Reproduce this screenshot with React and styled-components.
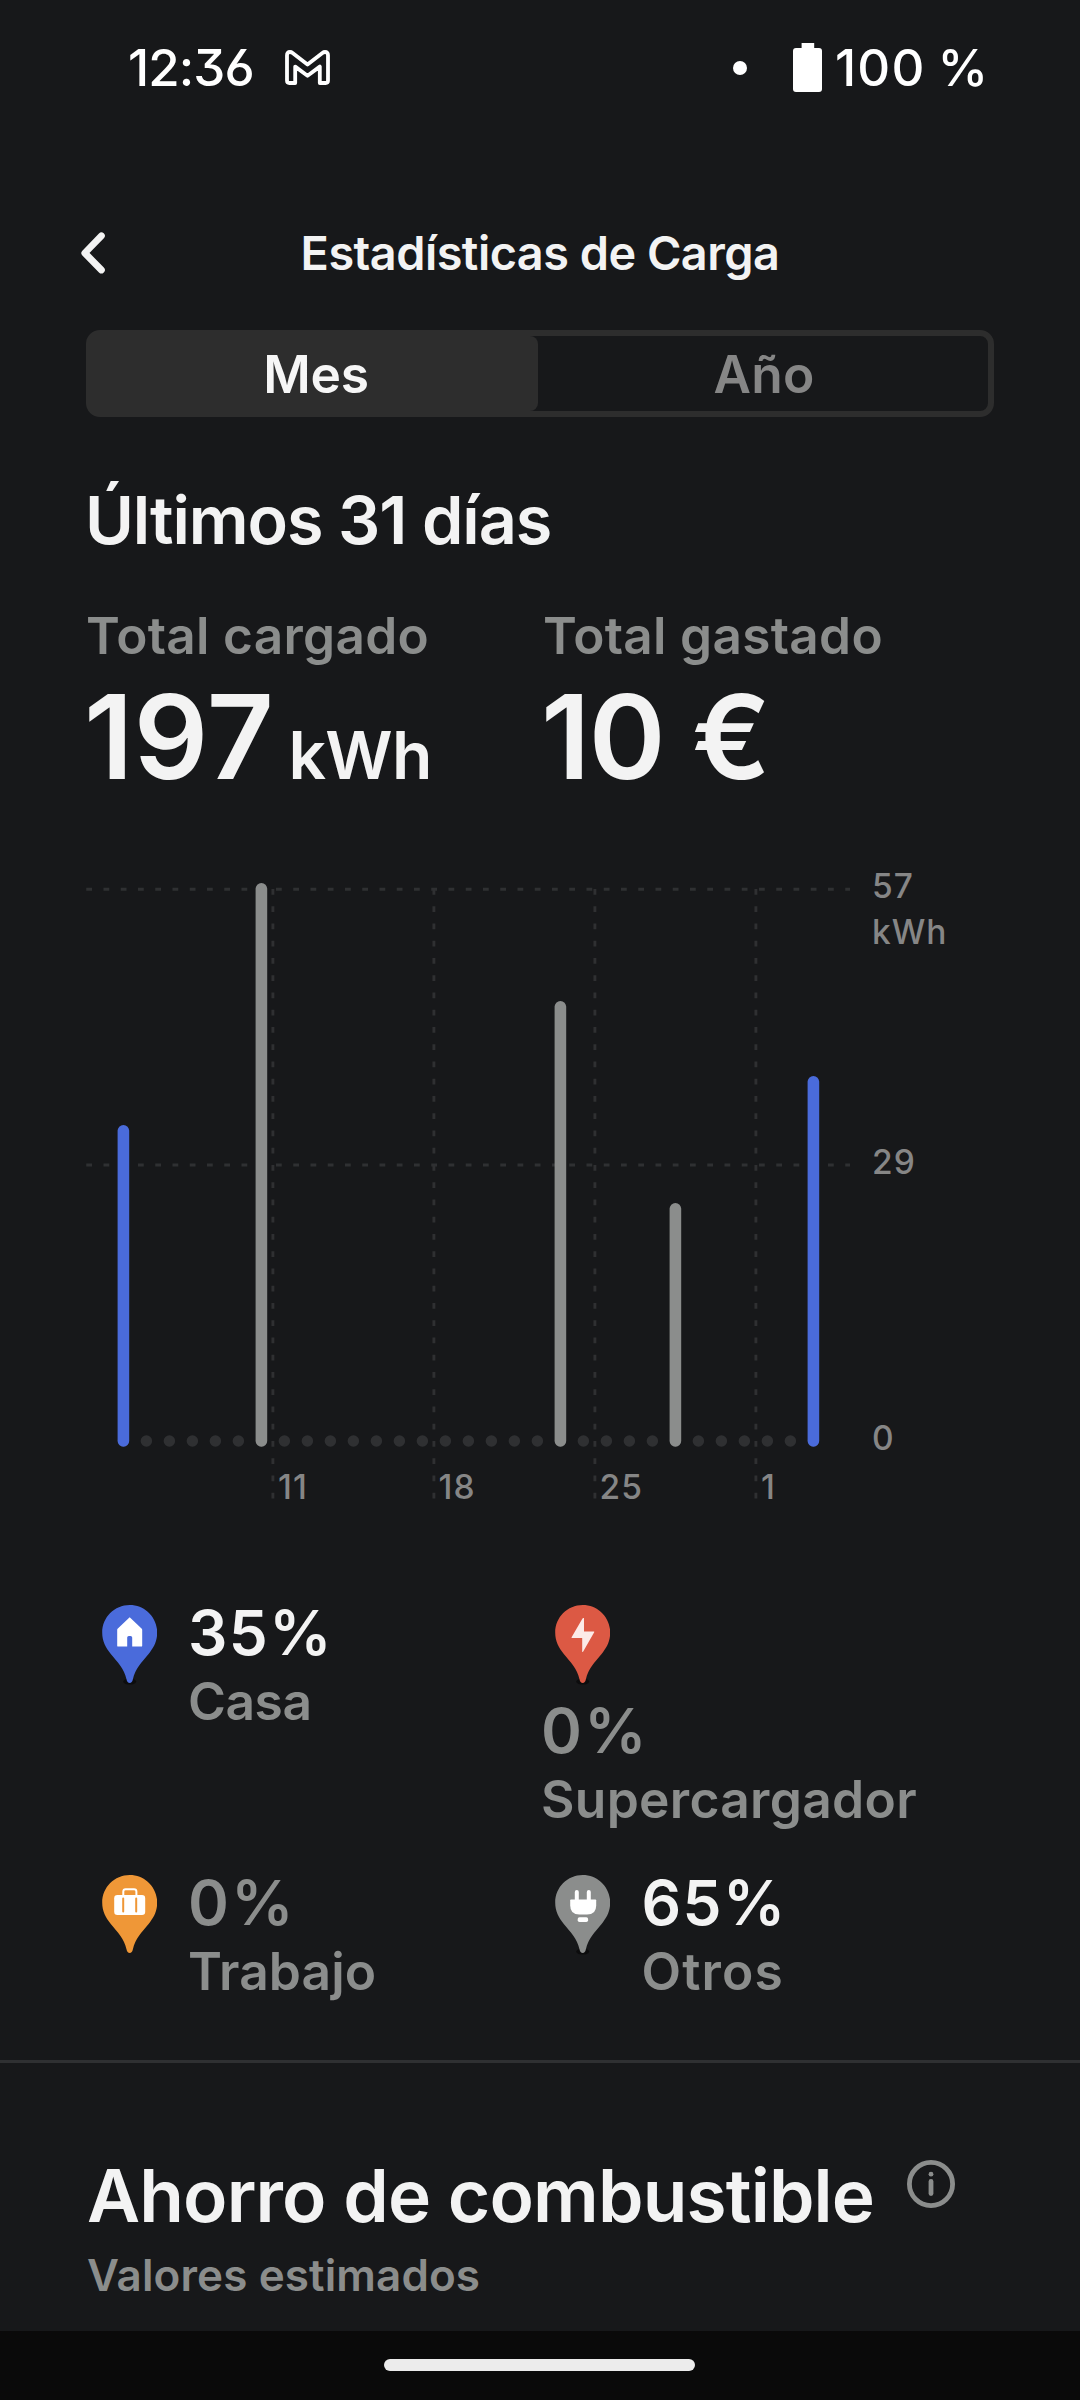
import React from 'react';
import styled, { createGlobalStyle } from 'styled-components';

const WHITE = '#f3f3f3';
const GRAY = '#8b8d8c';
const BLUE = '#4a6bdb';
const LINE = '#2f3032';

// one slot per day, 23px apart
const DAYS = 31;
const FIRST_DAY_X = 123.4;
const DAY_STEP = 23;
const BASE_Y = 1441;

const bars = [
    { day: 0, top: 1125, color: BLUE },
    { day: 6, top: 883, color: GRAY },
    { day: 19, top: 1001, color: GRAY },
    { day: 24, top: 1203, color: GRAY },
    { day: 30, top: 1076, color: BLUE },
];

const weeks = [
    { x: 272.9, label: '11', left: 278 },
    { x: 433.9, label: '18', left: 438.5 },
    { x: 594.9, label: '25', left: 599.5 },
    { x: 755.9, label: '1', left: 761 },
];

const yLabels = [
    { text: '57', y: 898 },
    { text: 'kWh', y: 944 },
    { text: '29', y: 1174 },
    { text: '0', y: 1450 },
];

const HomeGlyph = () => (
    <path
        fill="#fff"
        d="M27.5 12.2 39.6 23.8Q40 24.2 40 25V40.7Q40 41.6 39.1 41.6H30V32.6Q30 31 28.4 31H26.6Q25 31 25 32.6V41.6H15.9Q15 41.6 15 40.7V25Q15 24.2 15.4 23.8Z"
    />
);

const BoltGlyph = () => (
    <path fill="#fcebe8" d="M28.2 13H28.8V26.5H38.6Q39.4 26.5 39 27.3L28 46.6Q27.8 47 27.4 47H27V33H16.8Q16 33 16.4 32.2L27.3 13.4Q27.6 13 28.2 13Z" />
);

const CaseGlyph = () => (
    <g>
        <path d="M21.1 21V16.6Q21.1 14.2 23.5 14.2H31.8Q34.2 14.2 34.2 16.6V21" fill="none" stroke="#fff" strokeWidth="2" />
        <rect x="12" y="20" width="31" height="20" rx="3.2" fill="#fff" />
        <path d="M21 23.5V36.5M34 23.5V36.5" stroke="#ef9737" strokeWidth="2" strokeLinecap="round" />
    </g>
);

const PlugGlyph = () => (
    <g fill="#fff">
        <rect x="19.6" y="15" width="4" height="12" rx="2" />
        <rect x="31.6" y="15" width="4" height="12" rx="2" />
        <path d="M15.8 24.4H40.2Q41 24.4 41 25.2V30.5Q41 39.6 31.8 39.6H24.2Q15 39.6 15 30.5V25.2Q15 24.4 15.8 24.4Z" />
        <rect x="22.5" y="42.3" width="10.4" height="4.8" rx="1.8" />
    </g>
);

const places = [
    { value: '35%', label: 'Casa', active: true, color: BLUE, Glyph: HomeGlyph, shadow: true, vs: 1.5, ls: -0.4 },
    { value: '0%', label: 'Supercargador', color: '#dc5944', Glyph: BoltGlyph, shadow: true, vs: 2.4, ls: 0.3 },
    { value: '0%', label: 'Trabajo', color: '#ef9737', Glyph: CaseGlyph, vs: 2.4, ls: 0.1 },
    { value: '65%', label: 'Otros', active: true, color: GRAY, Glyph: PlugGlyph, shadow: true, vs: 1.5, ls: 1.2 },
];

const MailIcon = () => (
    <svg width="46" height="36" viewBox="0 0 46 36" fill="none" stroke="#fff" strokeWidth="3.8" strokeLinejoin="round">
        <path d="M10.2 33V16.6L22.5 25.7 34.8 16.6V33H40.6Q43 33 43 30.6V5.2Q43 2 40 2 38.6 2 37.4 2.9L22.5 14.6 7.6 2.9Q6.4 2 5 2 2 2 2 5.2V30.6Q2 33 4.4 33Z" />
    </svg>
);

const BatteryIcon = () => (
    <svg width="30" height="50" viewBox="0 0 30 50" fill="#fff">
        <rect x="8.6" y="0" width="12.6" height="8" />
        <rect x="0" y="5" width="29" height="44" rx="3" />
    </svg>
);

const BackIcon = () => (
    <svg width="26" height="44" viewBox="0 0 26 44" fill="none" stroke={WHITE} strokeWidth="6.8" strokeLinecap="round" strokeLinejoin="round">
        <path d="M21.4 4.8 4.8 22 21.4 39" />
    </svg>
);

const InfoIcon = () => (
    <svg width="48" height="48" viewBox="0 0 48 48" fill="none" stroke={GRAY}>
        <circle cx="24" cy="24" r="21.6" strokeWidth="4.8" />
        <circle cx="24" cy="14.2" r="2.4" fill={GRAY} stroke="none" />
        <path d="M24 21.5V33.5" strokeWidth="4.8" strokeLinecap="round" />
    </svg>
);

const Pin = ({ color, shadow, children }) => (
    <PinSvg width="55.4" height="81" viewBox="0 0 55 81">
        {shadow && <ellipse cx="27.5" cy="76.6" rx="6.5" ry="3" fill="#0c0c0d" />}
        <path
            fill={color}
            d="M27.5 0C12.3 0 0 12.3 0 27.5 0 36.5 3.6 42.8 8.6 48.9 15.4 57.2 22 63.5 24.3 74.2 24.9 76.8 25.8 78 27.5 78S30.1 76.8 30.7 74.2C33 63.5 39.6 57.2 46.4 48.9 51.4 42.8 55 36.5 55 27.5 55 12.3 42.7 0 27.5 0Z"
        />
        {children}
    </PinSvg>
);

const Chart = () => (
    <ChartSvg viewBox="0 850 1080 660">
        <g stroke={LINE} strokeWidth="2.9" strokeDasharray="5.75 11.5">
            <path d="M86.25 889.2H850M86.25 1165H850" />
            {weeks.map((w) => (
                <path key={w.label} d={`M${w.x} 889V1499`} />
            ))}
        </g>
        {Array.from({ length: DAYS }, (_, i) => (
            <circle key={i} cx={FIRST_DAY_X + i * DAY_STEP} cy={BASE_Y} r="5.75" fill={LINE} />
        ))}
        {bars.map((b) => (
            <rect
                key={b.day}
                x={FIRST_DAY_X + b.day * DAY_STEP - 5.8}
                y={b.top}
                width="11.6"
                height={BASE_Y + 5.8 - b.top}
                rx="5.8"
                fill={b.color}
            />
        ))}
        {weeks.map((w) => (
            <AxisText key={w.label} x={w.left} y="1499.3">{w.label}</AxisText>
        ))}
        {yLabels.map((l) => (
            <AxisText key={l.text} x="872" y={l.y}>{l.text}</AxisText>
        ))}
    </ChartSvg>
);

export default function App() {
    return (
        <Screen>
            <GlobalStyle />
            <StatusBar>
                <Clock>12:36</Clock>
                <MailIcon />
                <Dot />
                <BatteryIcon />
                <Battery>100 %</Battery>
            </StatusBar>

            <Header>
                <BackButton aria-label="Atrás">
                    <BackIcon />
                </BackButton>
                <Title>Estadísticas de Carga</Title>
            </Header>

            <Tabs>
                <Tab $active>Mes</Tab>
                <Tab>Año</Tab>
            </Tabs>

            <Period>Últimos 31 días</Period>

            <Stats>
                <div>
                    <StatLabel $ls={0.3}>Total cargado</StatLabel>
                    <StatValue $ls={0.6}>
                        197<Unit>kWh</Unit>
                    </StatValue>
                </div>
                <div>
                    <StatLabel $ls={0.3}>Total gastado</StatLabel>
                    <StatValue $ls={-1.6}>10 €</StatValue>
                </div>
            </Stats>

            <Chart />

            <Places>
                {places.map(({ value, label, active, color, Glyph, shadow, vs, ls }) => (
                    <Place key={label}>
                        <Pin color={color} shadow={shadow}>
                            <Glyph />
                        </Pin>
                        <PlaceText>
                            <PlaceValue $active={active} $ls={vs}>{value}</PlaceValue>
                            <PlaceLabel $ls={ls}>{label}</PlaceLabel>
                        </PlaceText>
                    </Place>
                ))}
            </Places>

            <Savings>
                <SavingsHead>
                    <SavingsTitle>Ahorro de combustible</SavingsTitle>
                    <InfoIcon />
                </SavingsHead>
                <SavingsNote>Valores estimados</SavingsNote>
            </Savings>

            <NavBar>
                <NavHandle />
            </NavBar>
        </Screen>
    );
}

const GlobalStyle = createGlobalStyle`
    * {
        box-sizing: border-box;
    }

    body {
        margin: 0;
        background: #17181a;
    }

    svg {
        display: block;
        flex-shrink: 0;
    }
`;

const Screen = styled.div`
    display: flex;
    flex-direction: column;
    width: 1080px;
    height: 2400px;
    overflow: hidden;
    background: #17181a;
    color: ${WHITE};
    font-family: Inter, 'Liberation Sans', sans-serif;
    font-weight: 600;
    white-space: nowrap;
`;

const StatusBar = styled.div`
    display: flex;
    align-items: center;
    height: 135px;
    padding: 0 93px 0 128px;
    color: #fff;
    font-size: 51px;
    font-weight: 500;
    font-feature-settings: 'ss01';
`;

const Clock = styled.span`
    width: 157px;
    letter-spacing: -0.9px;
`;

const Dot = styled.span`
    width: 14px;
    height: 14px;
    margin-left: auto;
    margin-right: 46px;
    border-radius: 50%;
    background: #fff;
`;

const Battery = styled.span`
    width: 152px;
    margin-left: 12px;
    letter-spacing: 1.2px;
    word-spacing: -3px;
`;

const Header = styled.header`
    display: grid;
    grid-template-columns: 160px 1fr 160px;
    align-items: center;
    height: 100px;
    margin: 68px 0 27px;
`;

const BackButton = styled.button`
    display: flex;
    margin: 0;
    padding: 0 0 0 80px;
    border: none;
    background: none;
`;

const Title = styled.h1`
    margin: 0;
    font-size: 46.8px;
    font-weight: 600;
    text-align: center;
    letter-spacing: -0.5px;
`;

const Tabs = styled.div`
    display: flex;
    height: 87px;
    margin: 0 86px;
    border: 6px solid #2d2d2d;
    border-radius: 14px;
`;

const Tab = styled.div`
    display: flex;
    flex: ${(p) => (p.$active ? '0 0 446px' : '1')};
    align-items: center;
    justify-content: center;
    padding-left: 2px;
    border-radius: 0 8px 8px 0;
    background: ${(p) => (p.$active ? '#2d2d2d' : 'transparent')};
    color: ${(p) => (p.$active ? '#f6f6f6' : '#868686')};
    font-size: 51.5px;
    letter-spacing: ${(p) => (p.$active ? '-0.3px' : '0.3px')};
`;

const Period = styled.h2`
    margin: 63px 0 44.5px 85px;
    font-size: 66.5px;
    font-weight: 600;
    line-height: 80px;
    letter-spacing: -1.1px;
`;

const Stats = styled.div`
    display: grid;
    grid-template-columns: 457px 1fr;
    margin-left: 86px;
`;

const StatLabel = styled.div`
    color: ${GRAY};
    font-size: 51.3px;
    line-height: 60px;
    letter-spacing: ${(p) => p.$ls}px;
`;

const StatValue = styled.div`
    display: flex;
    align-items: baseline;
    height: 142px;
    margin: 1px 0 0 -2px;
    font-size: 116.5px;
    line-height: 142px;
    letter-spacing: ${(p) => p.$ls}px;
`;

const Unit = styled.span`
    margin-left: 14px;
    font-size: 66px;
    line-height: 66px;
    letter-spacing: -0.7px;
`;

const ChartSvg = styled.svg`
    width: 1080px;
    height: 660px;
    margin-top: 42.5px;
`;

const AxisText = styled.text`
    fill: #868686;
    font-size: 33.5px;
    font-weight: 500;
    letter-spacing: 1px;
`;

const Places = styled.div`
    display: grid;
    grid-template-columns: 453.5px 453.5px;
    grid-template-rows: 270px 189px;
    margin: 90.5px 0 0 87.5px;
`;

const Place = styled.div`
    display: flex;
    flex-wrap: wrap;
    align-content: flex-start;
    align-items: flex-start;
`;

const PinSvg = styled.svg`
    margin: 4.5px 31px 12.5px 14px;
`;

const PlaceText = styled.div`
    height: 137px;
`;

const PlaceValue = styled.div`
    color: ${(p) => (p.$active ? WHITE : GRAY)};
    font-size: 62px;
    line-height: 64px;
    letter-spacing: ${(p) => p.$ls}px;
`;

const PlaceLabel = styled.div`
    color: ${GRAY};
    font-size: 51.5px;
    line-height: 73px;
    letter-spacing: ${(p) => p.$ls}px;
`;

const Savings = styled.section`
    flex: 1;
    padding: 88px 0 0 87px;
    border-top: 3px solid ${LINE};
`;

const SavingsHead = styled.div`
    display: flex;
    align-items: flex-start;

    svg {
        margin: 9px 0 0 33px;
    }
`;

const SavingsTitle = styled.h2`
    width: 787px;
    margin: 0;
    font-size: 73px;
    font-weight: 600;
    line-height: 90px;
    letter-spacing: -0.85px;
`;

const SavingsNote = styled.div`
    margin-top: 4px;
    color: ${GRAY};
    font-size: 44px;
    line-height: 60px;
    letter-spacing: 0.1px;
`;

const NavBar = styled.div`
    display: flex;
    height: 69px;
    padding: 28px 0 0 384px;
    background: #0a0a0a;
`;

const NavHandle = styled.div`
    width: 311px;
    height: 12px;
    border-radius: 6px;
    background: #ececec;
`;
